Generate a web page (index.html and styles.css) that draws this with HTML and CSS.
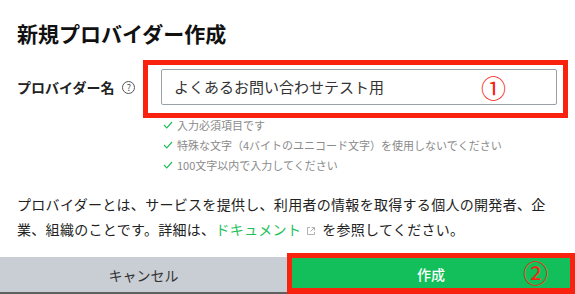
FILE: index.html
```html
<!DOCTYPE html>
<html lang="ja">
<head>
<meta charset="utf-8">
<link rel="stylesheet" href="styles.css">
</head>
<body>
<div class="dialog">
  <div class="content">
    <h1 class="title">新規プロバイダー作成</h1>
    <div class="form-row">
      <div class="label">
        <span>プロバイダー名</span>
        <span class="help">?</span>
      </div>
      <div class="field">
        <div class="input-wrap">
          <div class="input">よくあるお問い合わせテスト用</div>
          <span class="mark mark-1">①</span>
        </div>
        <ul class="checks">
          <li><svg class="check" viewBox="0 0 10 8" width="10" height="8"><polyline points="1,4 3.8,6.8 9,1" fill="none" stroke="#1fbf5a" stroke-width="1.2"/></svg>入力必須項目です</li>
          <li><svg class="check" viewBox="0 0 10 8" width="10" height="8"><polyline points="1,4 3.8,6.8 9,1" fill="none" stroke="#1fbf5a" stroke-width="1.2"/></svg>特殊な文字（4バイトのユニコード文字）を使用しないでください</li>
          <li><svg class="check" viewBox="0 0 10 8" width="10" height="8"><polyline points="1,4 3.8,6.8 9,1" fill="none" stroke="#1fbf5a" stroke-width="1.2"/></svg>100文字以内で入力してください</li>
        </ul>
      </div>
    </div>
    <p class="desc">プロバイダーとは、サービスを提供し、利用者の情報を取得する個人の開発者、企業、組織のことです。詳細は、<span class="link">ドキュメント</span><svg class="ext" viewBox="0 0 10 10" width="10" height="10"><path d="M4 1.5H1.5V8.5H8.5V6" fill="none" stroke="#b0b0b0" stroke-width="1"/><path d="M5.5 1.5H8.5V4.5M8.5 1.5L4.5 5.5" fill="none" stroke="#b0b0b0" stroke-width="1"/></svg><span>を参照してください。</span></p>
  </div>
  <div class="footer">
    <div class="btn cancel">キャンセル</div>
    <div class="btn create">作成<span class="mark mark-2">②</span></div>
  </div>
</div>
</body>
</html>
```

FILE: styles.css
```css
* { box-sizing: border-box; }
html, body {
  margin: 0;
  padding: 0;
  background: #fff;
}
body {
  width: 575px;
  height: 294px;
  overflow: hidden;
  font-family: "Noto Sans CJK JP", "Noto Sans", sans-serif;
  color: #222;
}
.dialog {
  display: flex;
  flex-direction: column;
  height: 294px;
}
.content {
  padding: 18px 17px 0 17px;
}
.title {
  margin: 0;
  font-size: 21px;
  line-height: 30px;
  font-weight: 700;
  color: #111;
}
.form-row {
  display: flex;
  margin-top: 21px;
}
.label {
  width: 144px;
  height: 36px;
  display: flex;
  align-items: center;
  gap: 6px;
  font-size: 14px;
  font-weight: 700;
  color: #222;
}
.help {
  width: 13px;
  height: 13px;
  border: 1px solid #555;
  border-radius: 50%;
  font-size: 9px;
  line-height: 11px;
  text-align: center;
  font-weight: 400;
  color: #444;
  margin-left: 2px;
}
.field {
  width: 396px;
}
.input-wrap {
  position: relative;
}
.input-wrap::after {
  content: "";
  position: absolute;
  left: -18px;
  right: -11px;
  top: -9px;
  bottom: -13px;
  border: 5px solid #f8220f;
  pointer-events: none;
}
.input {
  height: 36px;
  border: 1px solid #9aa0a8;
  border-radius: 2px;
  padding: 0 12px;
  font-size: 15px;
  line-height: 34px;
  color: #333;
}
.mark {
  position: absolute;
  color: #f8220f;
  font-size: 25px;
  line-height: 25px;
  font-weight: 400;
  font-family: "Noto Sans CJK JP", sans-serif;
}
.mark-1 {
  left: 320px;
  top: 6px;
}
.checks {
  list-style: none;
  margin: 10px 0 0 0;
  padding: 0 0 0 2px;
}
.checks li {
  display: flex;
  align-items: center;
  height: 20px;
  font-size: 11px;
  color: #8a8a8a;
  white-space: nowrap;
}
.check {
  margin-right: 4px;
  flex: none;
}
.desc {
  margin: 17px 0 0 0;
  font-size: 14px;
  line-height: 25px;
  letter-spacing: 0.3px;
  color: #222;
}
.link {
  color: #1fbf5a;
}
.ext {
  margin: 0 6px 0 5px;
  vertical-align: -1px;
}
.footer {
  display: flex;
  margin-top: auto;
  height: 37px;
}
.btn {
  display: flex;
  align-items: center;
  justify-content: center;
  font-size: 14px;
}
.cancel {
  width: 287px;
  background: #c9cdd4;
  border-bottom: 2px solid #5f5f5f;
  color: #333;
}
.create {
  flex: 1;
  position: relative;
  background: #12bf5a;
  color: #fff;
  font-weight: 500;
  padding-bottom: 3px;
}
.create::after {
  content: "";
  position: absolute;
  left: 0;
  right: 0;
  top: -4px;
  bottom: 0;
  border: 5px solid #f8220f;
  border-bottom-width: 6px;
  pointer-events: none;
}
.mark-2 {
  left: 236px;
  top: 3px;
}
```
